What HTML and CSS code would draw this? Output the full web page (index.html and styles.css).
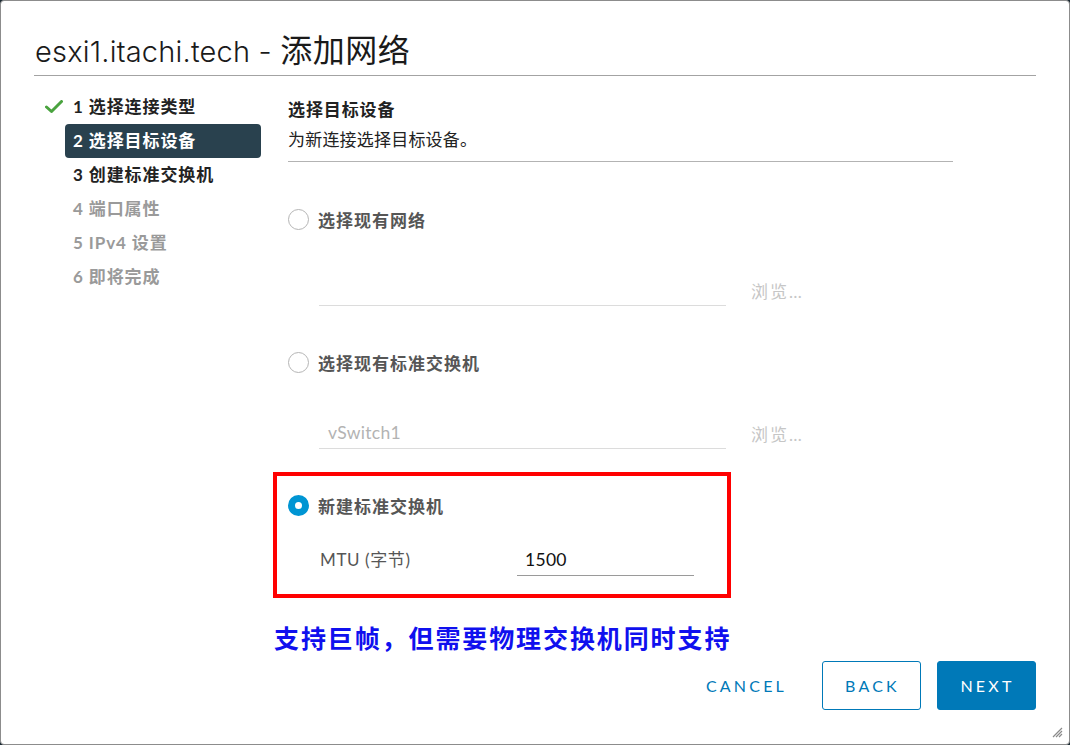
FILE: index.html
```html
<!DOCTYPE html>
<html lang="zh-CN">
<head>
<meta charset="utf-8">
<title>添加网络</title>
<link rel="stylesheet" href="styles.css">
</head>
<body>
<div class="modal">
  <header class="modal-header">
    <h1 class="title">esxi1.itachi.tech - <span class="title-cjk">添加网络</span></h1>
  </header>
  <div class="modal-body">
    <nav class="steps">
      <div class="step done">
        <svg class="check" width="18" height="14" viewBox="0 0 18 14"><path d="M1.5 7 L6.5 11.5 L16.5 1.5" fill="none" stroke="#4aa33f" stroke-width="3" stroke-linecap="round" stroke-linejoin="round"/></svg>
        1 选择连接类型
      </div>
      <div class="step active">2 选择目标设备</div>
      <div class="step">3 创建标准交换机</div>
      <div class="step disabled">4 端口属性</div>
      <div class="step disabled">5 IPv4 设置</div>
      <div class="step disabled">6 即将完成</div>
    </nav>
    <section class="content">
      <div class="section-head">
        <h2 class="section-title">选择目标设备</h2>
        <p class="section-desc">为新连接选择目标设备。</p>
      </div>

      <div class="option option-first">
        <div class="radio-row"><span class="radio"></span><span class="radio-label">选择现有网络</span></div>
        <div class="field-row">
          <div class="text-input"></div>
          <span class="browse">浏览…</span>
        </div>
      </div>

      <div class="option">
        <div class="radio-row"><span class="radio"></span><span class="radio-label">选择现有标准交换机</span></div>
        <div class="field-row">
          <div class="text-input placeholder">vSwitch1</div>
          <span class="browse">浏览…</span>
        </div>
      </div>

      <div class="highlight-box">
        <div class="radio-row"><span class="radio checked"></span><span class="radio-label">新建标准交换机</span></div>
        <div class="mtu-row">
          <span class="mtu-label">MTU (字节)</span>
          <div class="mtu-input">1500</div>
        </div>
      </div>

      <p class="note">支持巨帧，但需要物理交换机同时支持</p>
    </section>
  </div>
  <footer class="modal-footer">
    <button class="btn btn-link">CANCEL</button>
    <button class="btn btn-outline">BACK</button>
    <button class="btn btn-primary">NEXT</button>
  </footer>
  <svg class="resize-handle" width="12" height="12" viewBox="0 0 12 12">
    <path d="M11 2 L2 11 M11 5 L5 11 M11 8 L8 11" stroke="#8a8a8a" stroke-width="1.2"/>
  </svg>
</div>
</body>
</html>
```

FILE: styles.css
```css
* { box-sizing: border-box; }

html, body {
  margin: 0;
  padding: 0;
  background: #1b2a33;
}

body {
  font-family: "Lato", "Noto Sans CJK SC", sans-serif;
  color: #333;
}

.modal {
  position: relative;
  width: 1070px;
  height: 745px;
  background: #fff;
  border: 1px solid #8c8c8c;
  border-radius: 4px;
  overflow: hidden;
}

.modal-header {
  margin: 0 33px;
  padding: 27px 0 3px 1px;
  border-bottom: 1px solid #a3a3a3;
}

.title {
  margin: 0;
  font-family: "Inter", "Noto Sans CJK SC", sans-serif;
  font-weight: 300;
  font-size: 29px;
  line-height: 40px;
  color: #1a1a1a;
  letter-spacing: 0.2px;
}

.title-cjk {
  font-family: "Noto Sans CJK SC", sans-serif;
  font-weight: 400;
  font-size: 32px;
  letter-spacing: 0.5px;
}

.modal-body {
  display: flex;
  padding-top: 14px;
}

.steps {
  margin-left: 64px;
  width: 196px;
  display: flex;
  flex-direction: column;
}

.step {
  position: relative;
  height: 34px;
  line-height: 34px;
  padding-left: 8px;
  font-size: 17px;
  font-weight: 700;
  letter-spacing: 0.9px;
  color: #222;
  border-radius: 4px;
}

.step.active {
  background: #29414e;
  color: #fff;
}

.step.disabled {
  color: #9a9a9a;
}

.check {
  position: absolute;
  left: -20px;
  top: 10px;
}

.content {
  margin-left: 27px;
  width: 665px;
  padding-top: 10px;
}

.section-head {
  padding-bottom: 11px;
  border-bottom: 1px solid #b3b3b3;
}

.section-title {
  margin: 0;
  font-size: 17px;
  line-height: 20px;
  font-weight: 700;
  letter-spacing: 0.9px;
  color: #222;
}

.section-desc {
  margin: 10px 0 0;
  font-size: 17px;
  line-height: 20px;
  color: #222;
  letter-spacing: 0.2px;
}

.option-first { margin-top: 45px; }

.option + .option { margin-top: 44px; }

.radio-row {
  display: flex;
  align-items: center;
  height: 24px;
}

.radio {
  width: 21px;
  height: 21px;
  border-radius: 50%;
  border: 1px solid #b5b5b5;
  background: #fff;
  flex: none;
}

.radio.checked {
  border: 7px solid #0095d3;
}

.radio-label {
  margin-left: 9px;
  font-size: 17px;
  font-weight: 700;
  letter-spacing: 1px;
  color: #565656;
}

.field-row {
  margin-top: 44px;
  display: flex;
  align-items: center;
  padding-left: 31px;
}

.text-input {
  width: 407px;
  height: 31px;
  border-bottom: 1px solid #dcdcdc;
  padding-left: 9px;
  line-height: 30px;
  font-size: 17.5px;
  color: #b3b3b3;
  letter-spacing: 0.3px;
}

.browse {
  margin-left: 25px;
  font-size: 17px;
  color: #c6c6c6;
  letter-spacing: 2px;
}

.highlight-box {
  margin: 23px 0 0 -15px;
  width: 458px;
  border: 4px solid #ff0000;
  padding: 17px 0 18px 11px;
}

.mtu-row {
  margin-top: 28px;
  display: flex;
  align-items: flex-end;
  padding-left: 32px;
}

.mtu-label {
  width: 197px;
  font-size: 17px;
  line-height: 30px;
  color: #565656;
  padding-bottom: 1px;
  letter-spacing: 0.6px;
}

.mtu-input {
  width: 177px;
  height: 31px;
  border-bottom: 1px solid #9a9a9a;
  padding-left: 8px;
  line-height: 30px;
  font-size: 17.5px;
  color: #111;
  letter-spacing: 0.3px;
}

.note {
  margin: 24px 0 0 -14px;
  font-size: 25px;
  line-height: 30px;
  font-weight: 700;
  color: #1010ee;
  letter-spacing: 1.9px;
  font-family: "Noto Sans CJK SC", sans-serif;
}

.modal-footer {
  margin-top: 9px;
  padding-right: 33px;
  display: flex;
  justify-content: flex-end;
  gap: 16px;
}

.btn {
  height: 49px;
  font-family: "Lato", sans-serif;
  font-size: 16px;
  letter-spacing: 3.2px;
  border-radius: 3px;
  background: none;
  border: 1px solid transparent;
  color: #0079b8;
  padding: 0 18px 0 20px;
  cursor: pointer;
}

.btn-outline,
.btn-primary {
  width: 99px;
  padding: 0 0 0 2px;
  border-color: #0079b8;
}

.btn-primary {
  background: #0079b8;
  color: #fff;
}

.resize-handle {
  position: absolute;
  right: 6px;
  bottom: 6px;
}
```
